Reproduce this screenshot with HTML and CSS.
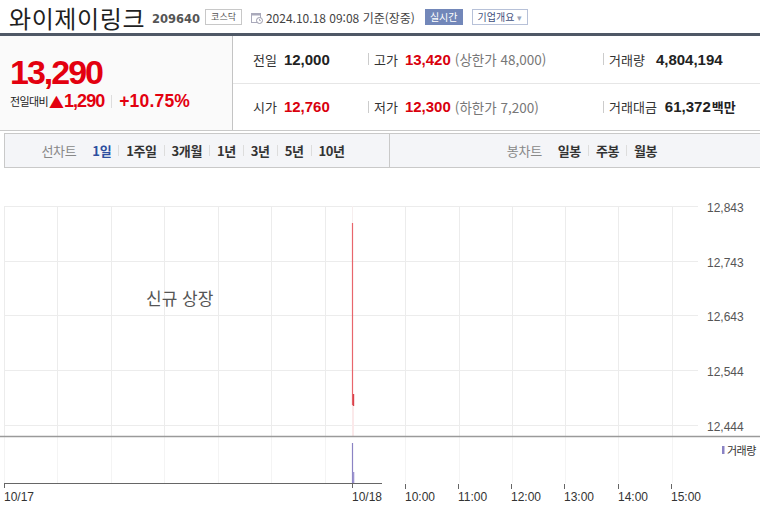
FILE: index.html
```html
<!DOCTYPE html>
<html lang="ko">
<head>
<meta charset="utf-8">
<link rel="stylesheet" href="styles.css">
</head>
<body>
<div class="page">
  <div class="header">
    <h1 class="title">와이제이링크</h1>
    <span class="code">209640</span>
    <span class="market">코스닥</span>
    <svg class="cal" width="12" height="12" viewBox="0 0 12 12">
      <rect x="0.5" y="1.5" width="9" height="9" fill="#fff" stroke="#aab" />
      <rect x="0.5" y="1.5" width="9" height="2" fill="#aab" />
      <circle cx="8.5" cy="8.5" r="3" fill="#fff" stroke="#99a" />
      <path d="M8.5 6.8 V8.6 H9.8" fill="none" stroke="#99a" stroke-width="0.8"/>
    </svg>
    <span class="date">2024.10.18 09:08 기준(장중)</span>
    <span class="live">실시간</span>
    <span class="overview">기업개요 <span class="caret">▾</span></span>
  </div>
  <div class="info">
    <div class="now">
      <div class="price">13,290</div>
      <div class="change"><span class="lbl">전일대비</span><span class="up">▲</span><span class="amt">1,290</span><span class="bar"></span><span class="rate">+10.75%</span></div>
    </div>
    <div class="table">
      <div class="row">
        <div class="cell c1"><span class="k">전일</span><b class="v">12,000</b></div>
        <div class="cell c2"><span class="k">고가</span><b class="v red">13,420</b><span class="sub">(상한가 48,000)</span></div>
        <div class="cell c3"><span class="k">거래량</span><b class="v">4,804,194</b></div>
      </div>
      <div class="row">
        <div class="cell c1"><span class="k">시가</span><b class="v red">12,760</b></div>
        <div class="cell c2"><span class="k">저가</span><b class="v red">12,300</b><span class="sub">(하한가 7,200)</span></div>
        <div class="cell c3"><span class="k">거래대금</span><b class="v">61,372</b><span class="unit">백만</span></div>
      </div>
    </div>
  </div>
  <div class="tabs">
    <div class="tabbox left">
      <span class="tlabel">선차트</span>
      <span class="tab on">1일</span><i class="sep"></i>
      <span class="tab">1주일</span><i class="sep"></i>
      <span class="tab">3개월</span><i class="sep"></i>
      <span class="tab">1년</span><i class="sep"></i>
      <span class="tab">3년</span><i class="sep"></i>
      <span class="tab">5년</span><i class="sep"></i>
      <span class="tab">10년</span>
    </div>
    <div class="tabbox right">
      <span class="tlabel">봉차트</span>
      <span class="tab">일봉</span><i class="sep"></i>
      <span class="tab">주봉</span><i class="sep"></i>
      <span class="tab">월봉</span>
    </div>
  </div>
  <svg class="chart" width="760" height="342" viewBox="0 168 760 342">
    <g stroke="#ececec" stroke-width="1" fill="none">
      <path d="M4 206.5 H698 M4 261.5 H698 M4 315.5 H698 M4 370.5 H698 M4 425.5 H698"/>
      <path d="M4.5 206 V436 M57.5 206 V436 M111.5 206 V436 M164.5 206 V436 M218.5 206 V436 M271.5 206 V436 M325.5 206 V436 M405.5 206 V436 M459.5 206 V436 M512.5 206 V436 M565.5 206 V436 M618.5 206 V436 M672.5 206 V436"/>
      <path d="M4.5 436 V483 M57.5 436 V483 M111.5 436 V483 M164.5 436 V483 M218.5 436 V483 M271.5 436 V483 M325.5 436 V483 M405.5 436 V483 M459.5 436 V483 M512.5 436 V483 M565.5 436 V483 M618.5 436 V483 M672.5 436 V483" stroke="#f4f4f4"/>
      <path d="M352.5 206 V436" stroke="#f6eeee"/>
    </g>
    <path d="M352.5 223 V405" stroke="#e8656c" stroke-width="1.2"/>
    <path d="M353.5 394 V406" stroke="#d9424b" stroke-width="1.4"/>
    <path d="M353 406 V436" stroke="#fbe9ea" stroke-width="2"/>
    <path d="M0 436.5 H760" stroke="#9a9a9a" stroke-width="1.5"/>
    <path d="M352.5 443 V483" stroke="#8b83c4" stroke-width="1.2"/>
    <path d="M353.5 472 V483" stroke="#9d95d0" stroke-width="1.6"/>
    <path d="M4 483.5 H382" stroke="#666" stroke-width="1"/>
    <g stroke="#666" stroke-width="1">
      <path d="M4.5 483 V488 M352.5 483 V488 M405.5 484 V489 M458.5 484 V489 M511.5 484 V489 M564.5 484 V489 M618.5 484 V489 M671.5 484 V489"/>
    </g>
    <g class="ylab">
      <text x="707" y="212">12,843</text>
      <text x="707" y="267">12,743</text>
      <text x="707" y="321">12,643</text>
      <text x="707" y="376">12,544</text>
      <text x="707" y="431">12,444</text>
    </g>
    <g class="xlab">
      <text x="4" y="501">10/17</text>
      <text x="352" y="501">10/18</text>
      <text x="405" y="501">10:00</text>
      <text x="458" y="501">11:00</text>
      <text x="511" y="501">12:00</text>
      <text x="564" y="501">13:00</text>
      <text x="618" y="501">14:00</text>
      <text x="671" y="501">15:00</text>
    </g>
    <text class="newlist" x="146" y="305">신규 상장</text>
    <rect x="722" y="446" width="2.5" height="8" fill="#8b83c4"/>
    <text class="legend" x="727" y="455">거래량</text>
  </svg>
</div>
</body>
</html>
```

FILE: styles.css
```css
* { box-sizing: border-box; }
html, body { margin: 0; padding: 0; background: #fff; }
body {
  font-family: "Noto Sans CJK KR", "Liberation Sans", sans-serif;
  color: #333;
  width: 760px;
  height: 510px;
  overflow: hidden;
}
.page { width: 760px; }

.header {
  display: flex;
  align-items: center;
  padding: 3px 0 0 9px;
  border-bottom: 3px solid #4f5866;
  height: 36px;
}
.title {
  margin: 0;
  font-size: 24px;
  font-weight: 400;
  color: #1f1f1f;
  letter-spacing: 0.6px;
  line-height: 30px;
  white-space: nowrap;
}
.code {
  margin-left: 7px;
  font-family: "DejaVu Sans", sans-serif;
  font-weight: 700;
  font-size: 11.5px;
  color: #555;
  margin-top: 1px;
}
.market {
  margin-left: 5px;
  font-size: 9px;
  color: #555;
  border: 1px solid #c8c8c8;
  padding: 0 5px;
  height: 16px;
  line-height: 14px;
  margin-top: -2px;
}
.cal { margin-left: 9px; margin-top: -1px; }
.date {
  margin-left: 3px;
  font-family: "Noto Sans CJK KR", sans-serif;
  font-size: 12px;
  color: #444;
  letter-spacing: 0;
  margin-top: -2px;
}
.live {
  margin-left: 10px;
  background: #7287b9;
  color: #fff;
  font-size: 10px;
  height: 16px;
  line-height: 16px;
  padding: 0 5px;
  margin-top: -2px;
}
.overview {
  margin-left: 9px;
  border: 1px solid #b7c1d8;
  color: #3e4f7c;
  font-size: 10px;
  height: 16px;
  line-height: 14px;
  padding: 0 5px;
  margin-top: -2px;
}
.caret { color: #9aa3b8; font-size: 9px; }

.info {
  display: flex;
  height: 95px;
  border-bottom: 1px solid #c9c9c9;
}
.now {
  width: 233px;
  background: #fafafa;
  border-right: 1px solid #c4c4c4;
  padding: 18px 0 0 10px;
}
.price {
  font-family: "Liberation Sans", sans-serif;
  font-size: 34px;
  font-weight: 700;
  color: #e3000f;
  letter-spacing: -2px;
  line-height: 36px;
}
.change {
  display: flex;
  align-items: center;
  margin-top: 1px;
  height: 20px;
}
.change .lbl { font-size: 11px; color: #222; letter-spacing: -0.6px; }
.change .up { color: #e3000f; font-size: 15px; margin-left: 1px; line-height: 1; }
.change .amt {
  font-family: "Liberation Sans", sans-serif;
  color: #e3000f; font-size: 18px; font-weight: 700; letter-spacing: -1px;
}
.change .bar { width: 1px; height: 13px; background: #ddd; margin: 0 7px; }
.change .rate {
  font-family: "Liberation Sans", sans-serif;
  color: #e3000f; font-size: 17.5px; font-weight: 700; letter-spacing: 0.2px;
}

.table { flex: 1; display: flex; flex-direction: column; }
.row { flex: 1; display: flex; align-items: center; }
.row + .row { border-top: 1px solid #e6e6e6; }
.cell { display: flex; align-items: center; height: 100%; }
.cell .k { font-size: 13px; color: #333; margin-right: 7px; letter-spacing: 0; }
.cell .v {
  font-family: "Liberation Sans", sans-serif;
  font-size: 15px; font-weight: 700; color: #222;
}
.cell .v.red { color: #d9000d; }
.cell .sub { font-size: 13.5px; color: #777; margin-left: 4px; letter-spacing: 0; }
.cell .unit { font-size: 13px; color: #222; font-weight: 700; margin-left: 1px; }
.c1 { width: 135px; padding-left: 20px; }
.c2 { width: 235px; padding-left: 6px; position: relative; }
.c3 { flex: 1; padding-left: 6px; position: relative; }
.c2::before, .c3::before {
  content: ""; position: absolute; left: 0; top: 50%; margin-top: -6px;
  width: 1px; height: 12px; background: #ccc;
}
.c3 .k { margin-right: 11px; }
.row + .row .c3 .k { margin-right: 8px; }

.tabs {
  display: flex;
  margin-top: 2px;
  padding-left: 4px;
  height: 35px;
}
.tabbox {
  display: flex;
  align-items: center;
  justify-content: center;
  background: #f4f5f8;
  border-top: 1px solid #c9c9c9;
  border-bottom: 1px solid #c9c9c9;
  font-size: 13px;
}
.tabbox.left { width: 386px; border-left: 1px solid #c9c9c9; border-right: 1px solid #c9c9c9; padding-right: 8px; }
.tabbox.right { flex: 1; padding-left: 14px; }
.tlabel { color: #888; margin-right: 16px; letter-spacing: -0.3px; }
.tab { font-weight: 700; color: #333; letter-spacing: -0.4px; }
.tab.on { color: #2d4fa0; }
.sep { display: inline-block; width: 1px; height: 11px; background: #ddd; margin: 0 7px; }

.chart { display: block; }
.ylab text { font-family: "Liberation Sans", sans-serif; font-size: 12px; fill: #555; }
.xlab text { font-family: "Liberation Sans", sans-serif; font-size: 12px; fill: #333; }
.newlist { font-family: "Noto Sans CJK KR", sans-serif; font-size: 17px; fill: #555; }
.legend { font-family: "Noto Sans CJK KR", sans-serif; font-size: 11px; fill: #333; letter-spacing: -0.5px; }
```
